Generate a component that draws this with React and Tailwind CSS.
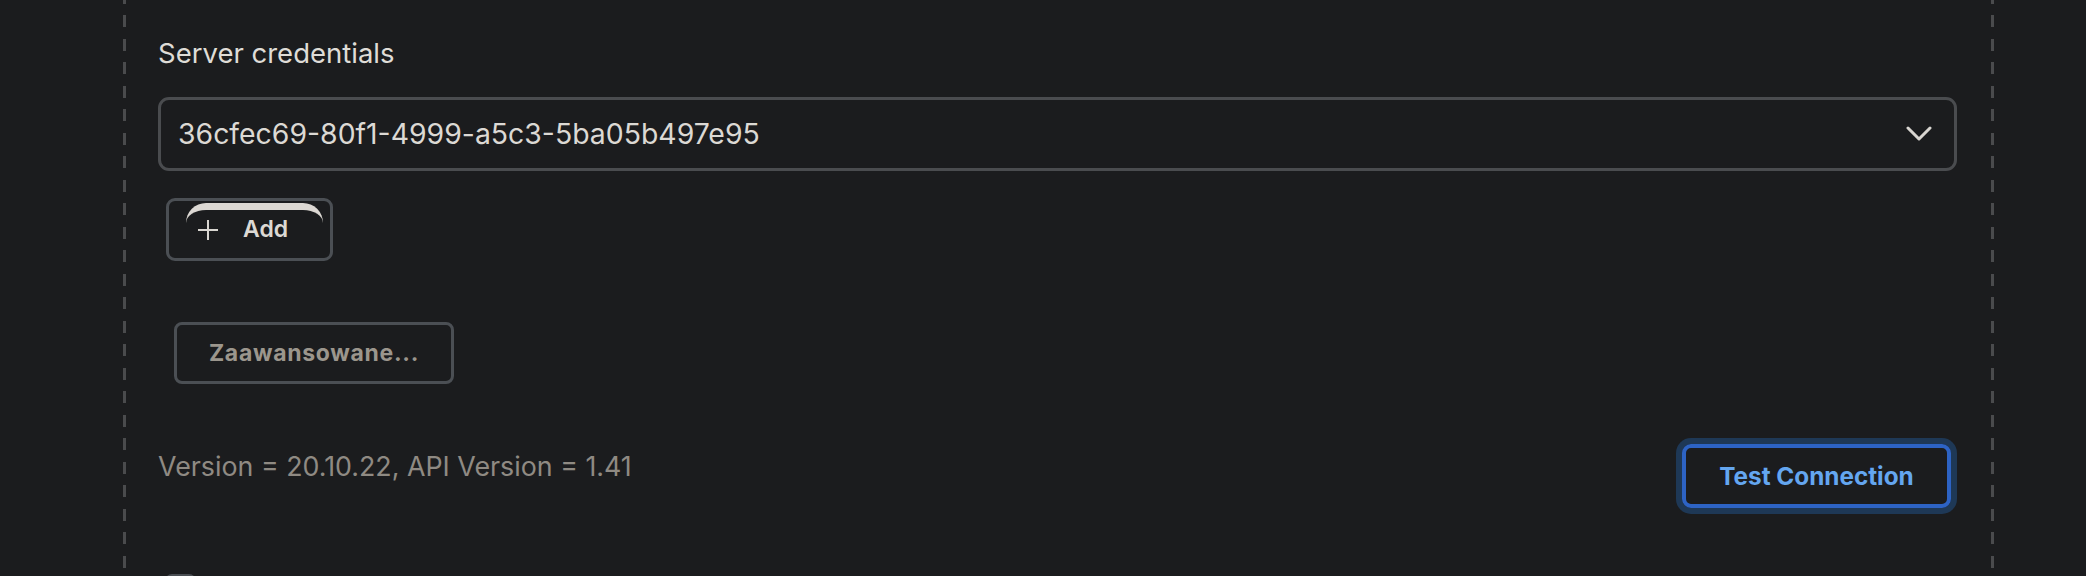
function DashedRule() {
  return (
    <div className="w-[3px] shrink-0 self-stretch bg-[repeating-linear-gradient(to_bottom,#4a4b4d_0_3.5px,transparent_3.5px_15px,#4a4b4d_15px_23.5px)]" />
  )
}

function Chevron() {
  return (
    <svg width="26" height="16" viewBox="0 0 26 16" fill="none" aria-hidden="true">
      <polyline points="2,2 13,13 24,2" stroke="#d9d6d1" strokeWidth="3" strokeLinecap="round" strokeLinejoin="round" />
    </svg>
  )
}

function PlusIcon() {
  return (
    <svg width="22" height="22" viewBox="0 0 22 22" fill="none" aria-hidden="true">
      <path d="M11 1v20M1 11h20" stroke="#d9d6d1" strokeWidth="2" />
    </svg>
  )
}

export default function App() {
  return (
    <div className="flex h-[576px] w-[2086px] overflow-hidden bg-[#1b1c1e] font-['Inter','Liberation_Sans',sans-serif]">
      <div className="w-[123px] shrink-0" />
      <DashedRule />

      <div className="flex flex-1 flex-col pl-[32px] pr-[34px] pt-[37px]">
        <div className="shrink-0 text-[27.5px] leading-[32px] text-[#dfdcd7]">Server credentials</div>

        {/* credential select */}
        <div className="mt-[28px] flex h-[74px] shrink-0 items-center justify-between rounded-[11px] border-[3px] border-[#4a4c4f] pl-[17px] pr-[22px]">
          <span className="text-[28.4px] leading-[32px] text-[#dcd9d4]">36cfec69-80f1-4999-a5c3-5ba05b497e95</span>
          <Chevron />
        </div>

        <div className="ml-[8px] mt-[27px] shrink-0">
          <button
            type="button"
            className="relative flex h-[63px] w-[167px] items-center gap-[24px] rounded-[9px] border-[3px] border-[#4b4f54] pl-[28px]"
          >
            <span className="absolute left-[17px] top-[2px] h-[40px] w-[137px] rounded-[26px] border-t-[7px] border-[#dcd8d3]" />
            <PlusIcon />
            <span className="text-[23px] font-semibold leading-none text-[#dcd9d4]">Add</span>
          </button>
        </div>

        <div className="ml-[16px] mt-[61px] shrink-0">
          <button
            type="button"
            className="flex h-[62px] w-[280px] items-center justify-center rounded-[8px] border-[3px] border-[#4b4f54] text-[23px] font-bold tracking-[0.7px] text-[#9b968d]"
          >
            Zaawansowane...
          </button>
        </div>

        <div className="mt-[60px] flex shrink-0 items-start justify-between">
          <div className="mt-[6px] text-[26.8px] leading-[32px] text-[#8f8a83]">
            Version = 20.10.22, API Version = 1.41
          </div>
          <button
            type="button"
            className="mr-[6px] flex h-[64px] w-[269px] items-center justify-center rounded-[9px] border-[4px] border-[#2d63c4] text-[24.3px] font-bold text-[#64a6f0] shadow-[0_0_0_6px_#1e3856]"
          >
            Test Connection
          </button>
        </div>

        <div className="ml-[7px] mt-[66px] h-[30px] w-[31px] shrink-0 rounded-[7px] bg-[#4a4e53]" />
      </div>

      <DashedRule />
      <div className="w-[92px] shrink-0" />
    </div>
  )
}
